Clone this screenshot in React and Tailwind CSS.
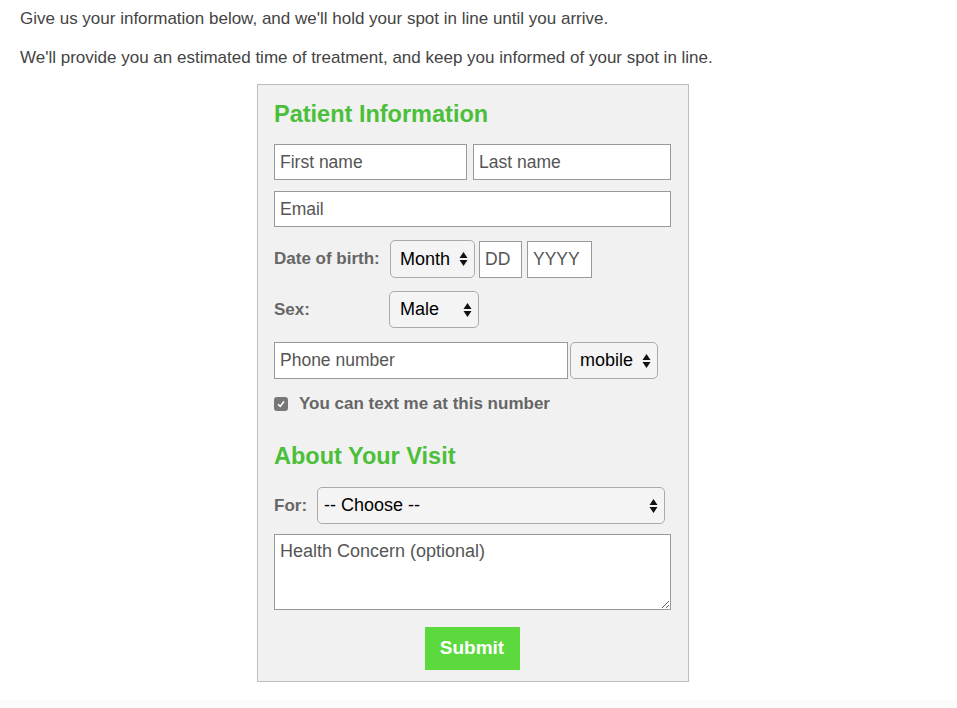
import React from "react";

const font = { fontFamily: '"Liberation Sans", Arial, sans-serif' };

function Arrows({ className = "" }) {
  return (
    <svg className={className} width="9" height="16" viewBox="0 0 9 16">
      <path d="M4.5 1 L8.5 7 H0.5 Z" fill="#111" />
      <path d="M4.5 15 L8.5 9 H0.5 Z" fill="#111" />
    </svg>
  );
}

function Select({ label, className = "" }) {
  return (
    <div
      className={`relative flex items-center rounded-[5px] border border-[#aaa] bg-[#f4f4f4] text-[18px] text-black ${className}`}
    >
      <span>{label}</span>
      <Arrows className="absolute right-[6px] top-1/2 -translate-y-1/2" />
    </div>
  );
}

function Field({ placeholder, className = "" }) {
  return (
    <input
      placeholder={placeholder}
      className={`border border-[#999] bg-white px-[5px] text-[17.5px] text-[#444] placeholder:text-[#555] outline-none ${className}`}
      style={font}
    />
  );
}

export default function App() {
  return (
    <div className="min-h-[708px] bg-white text-[#444]" style={font}>
      <div className="pt-[9px] pl-[20px] text-[17px] leading-[20px]">
        <p>Give us your information below, and we'll hold your spot in line until you arrive.</p>
        <p className="mt-[19px]">
          We'll provide you an estimated time of treatment, and keep you informed of your spot in line.
        </p>
      </div>

      <div className="ml-[257px] mt-[16px] w-[432px] border border-[#bdbdbd] bg-[#f1f1f1] pl-[16px] pr-[17px] pt-[15px] pb-[11px]">
        <h2 className="text-[23.5px] font-bold leading-[28px] text-[#4cbf3a]">Patient Information</h2>

        <div className="mt-[16px] flex gap-[6px]">
          <Field placeholder="First name" className="h-[36px] w-[193px]" />
          <Field placeholder="Last name" className="h-[36px] w-[198px]" />
        </div>
        <Field placeholder="Email" className="mt-[11px] h-[36px] w-[397px]" />

        <div className="mt-[13px] flex items-center">
          <span className="w-[116px] text-[17px] font-bold leading-[22px] text-[#666]">Date of birth:</span>
          <Select label="Month" className="h-[38px] w-[85px] pl-[9px]" />
          <Field placeholder="DD" className="ml-[4px] h-[37px] w-[43px]" />
          <Field placeholder="YYYY" className="ml-[5px] h-[37px] w-[65px]" />
        </div>

        <div className="mt-[13px] flex items-center">
          <span className="w-[115px] text-[17px] font-bold leading-[22px] text-[#666]">Sex:</span>
          <Select label="Male" className="h-[37px] w-[90px] pl-[10px]" />
        </div>

        <div className="mt-[14px] flex items-center gap-[2px]">
          <Field placeholder="Phone number" className="h-[37px] w-[294px]" />
          <Select label="mobile" className="h-[37px] w-[88px] pl-[9px]" />
        </div>

        <div className="mt-[15px] flex h-[20px] items-center">
          <span className="flex h-[14px] w-[14px] items-center justify-center rounded-[3px] bg-[#777]">
            <svg width="10" height="10" viewBox="0 0 10 10">
              <path d="M2 5.2 L4.2 7.4 L8 2.6" stroke="#fff" strokeWidth="1.6" fill="none" />
            </svg>
          </span>
          <span className="ml-[11px] text-[17px] font-bold leading-[20px] text-[#666]">
            You can text me at this number
          </span>
        </div>

        <h2 className="mt-[28px] text-[23.5px] font-bold leading-[28px] text-[#4cbf3a]">About Your Visit</h2>

        <div className="mt-[17px] flex items-center">
          <span className="w-[43px] text-[17px] font-bold leading-[22px] text-[#666]">For:</span>
          <Select label="-- Choose --" className="h-[37px] w-[348px] pl-[6px]" />
        </div>

        <textarea
          placeholder="Health Concern (optional)"
          className="mt-[10px] block h-[76px] w-[397px] resize-y border border-[#999] bg-white px-[5px] pt-[5px] text-[18px] leading-[22px] placeholder:text-[#555] outline-none"
          style={font}
        />

        <div className="mt-[17px] flex justify-center pr-[1px]">
          <button className="h-[43px] w-[95px] bg-[#5cd93c] text-[19px] font-bold text-white" style={font}>
            Submit
          </button>
        </div>
      </div>
      <div className="mt-[18px] h-[8px] bg-[#fbfbfb]" />
    </div>
  );
}
